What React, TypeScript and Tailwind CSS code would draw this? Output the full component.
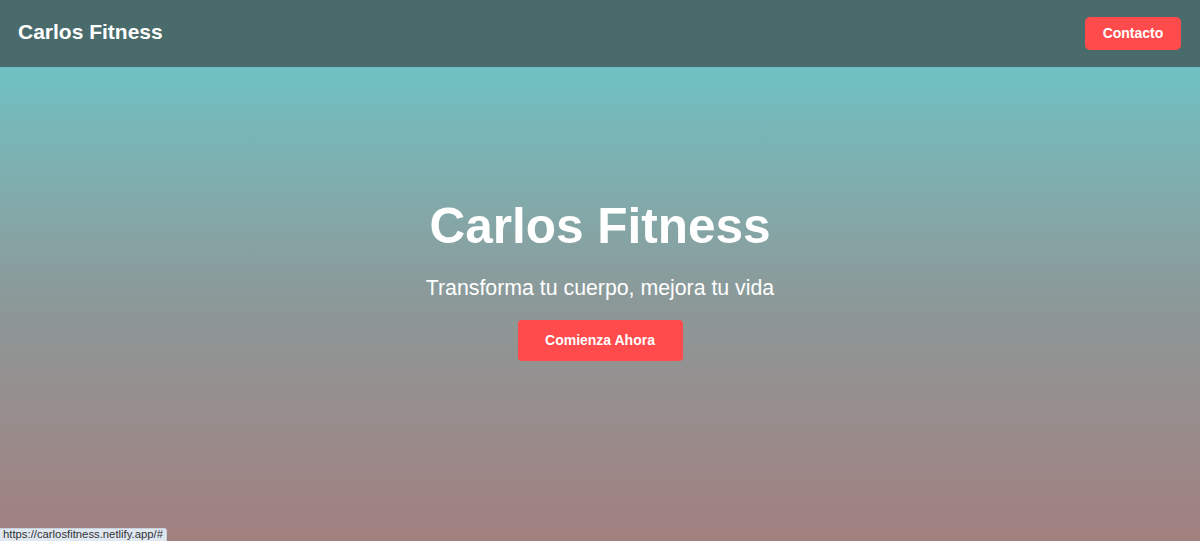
import React from "react";

export default function App() {
  return (
    <div className="relative h-[541px] w-full overflow-hidden font-['Liberation_Sans',Arial,sans-serif]">
      <header className="flex h-[67px] items-center justify-between bg-[#4a6b6b] pl-[18px] pr-[19px]">
        <div className="-mt-[3px] text-[21px] font-bold text-white">Carlos Fitness</div>
        <button className="-mt-[1px] h-[33px] w-[96px] rounded-[5px] bg-[#ff4b4b] text-[14px] font-bold text-white">
          Contacto
        </button>
      </header>
      <main className="flex h-[474px] flex-col items-center bg-gradient-to-b from-[#6ec1c3] via-[#8c9898] to-[#a28080] pt-[130px]">
        <h1 className="text-[49.5px] font-bold leading-[58px] text-white">Carlos Fitness</h1>
        <p className="mt-[21px] text-[21.3px] leading-[24px] text-white">Transforma tu cuerpo, mejora tu vida</p>
        <button className="mt-[20px] h-[41px] w-[165px] rounded-[4px] bg-[#ff4b4b] text-[14px] font-bold text-white">
          Comienza Ahora
        </button>
      </main>
      <div className="absolute bottom-0 left-0 flex h-[13px] items-center rounded-tr-[3px] border-t border-r border-[#c8d0da] bg-[#dfe7f1] px-[3px] text-[11.3px] leading-none text-[#333]">
        https://carlosfitness.netlify.app/#
      </div>
    </div>
  );
}
